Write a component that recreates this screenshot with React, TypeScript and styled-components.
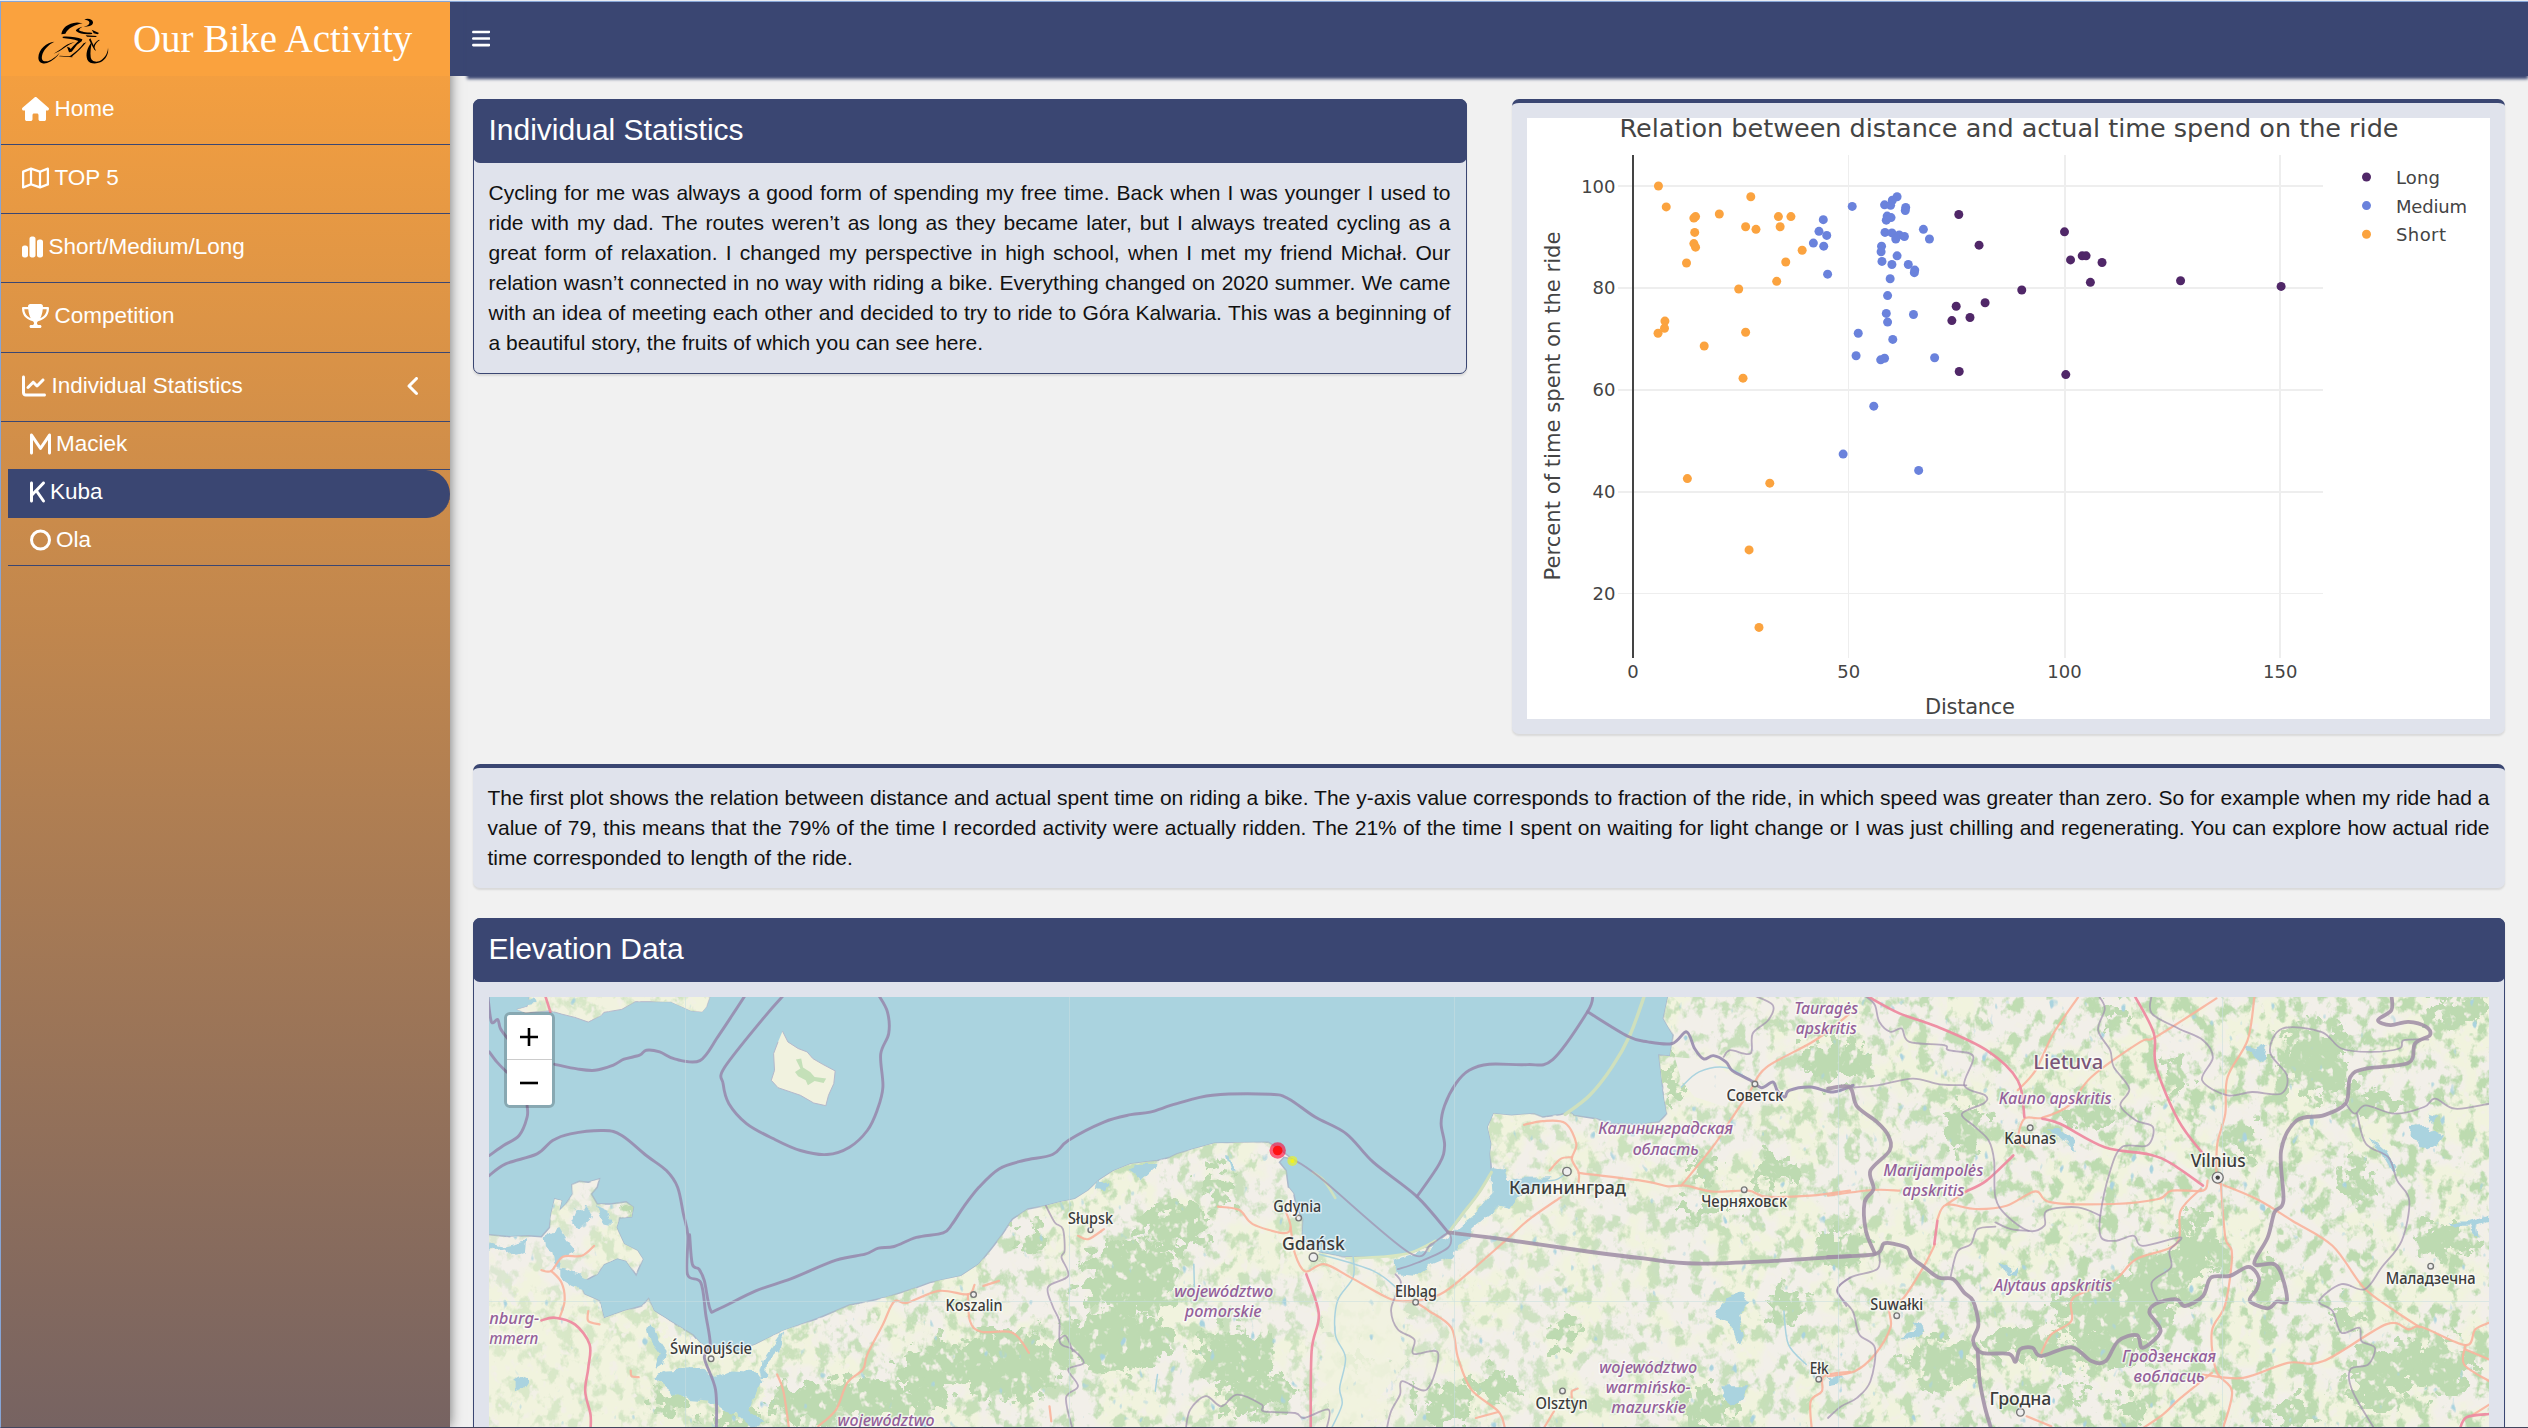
import React from "react";
import styled, { createGlobalStyle, css } from "styled-components";
import {
  FaAngleLeft,
  FaBars,
  FaChartLine,
  FaChartSimple,
  FaHouse,
  FaK,
  FaM,
  FaO,
  FaRegMap,
  FaTrophy,
} from "react-icons/fa6";

const navy = "#3a4672";
const orange = "#faa23e";
const panel = "#e0e3ec";

const GlobalStyle = createGlobalStyle`
  *, *::before, *::after { box-sizing: border-box; }
  body {
    margin: 0;
    background: #f1f1f1;
    font-family: "Liberation Sans", Arial, sans-serif;
    overflow: hidden;
  }
`;

const Window = styled.div`
  height: 1428px;
  padding-top: 1px;
  background: #e6ebf2;
  overflow: hidden;
`;

const Shell = styled.div`
  display: flex;
  height: 1427px;
  border-top: 1px solid #86a5d6;
  border-left: 1px solid #86a5d6;
  border-bottom: 1px solid #43465f;
  background: #f1f1f1;
  overflow: hidden;
`;

/* Sidebar */

const Sidebar = styled.aside`
  flex: none;
  width: 449px;
  z-index: 1;
  background: linear-gradient(${orange}, ${navy}) 0 0 / 100% 2080px no-repeat;
  box-shadow: 0 0 12px rgba(0, 0, 0, 0.55);
`;

const Brand = styled.div`
  display: flex;
  align-items: center;
  height: 74px;
  padding-left: 36px;
  background: ${orange};
  color: #fff;
  font: 39px/74px "Liberation Serif", "Times New Roman", serif;
  svg {
    margin-top: 3px;
  }
`;

const BrandName = styled.span`
  margin-left: 22.5px;
  white-space: nowrap;
`;

const Menu = styled.nav`
  display: flex;
  flex-direction: column;
`;

const itemText = css<{ $icon: number }>`
  display: flex;
  align-items: center;
  gap: 5.5px;
  color: #fff;
  font-size: 22.5px;
  border-bottom: 1px solid ${navy};
  svg {
    flex: none;
    width: 15px;
    height: 24px;
  }
  svg:first-child {
    width: ${(p) => p.$icon}px;
  }
`;

const MenuItem = styled.a<{ $icon: number; $tall?: boolean }>`
  ${itemText}
  height: ${(p) => (p.$tall ? 70 : 69)}px;
  padding: 0 29px 3px 21px;
  svg:last-child {
    margin-left: auto;
  }
`;

const SubMenu = styled.div`
  display: flex;
  flex-direction: column;
  padding-left: 7px;
`;

const SubItem = styled.a<{ $icon: number; $active?: boolean }>`
  ${itemText}
  height: 48px;
  padding: 0 0 3px 21.5px;
  ${(p) =>
    p.$active &&
    css`
      background: ${navy};
      border-radius: 0 24px 24px 0;
    `}
`;

/* Main column */

const Main = styled.div`
  flex: 1;
  display: flex;
  flex-direction: column;
  min-width: 0;
`;

const Topbar = styled.header`
  flex: none;
  z-index: 2;
  height: 74px;
  padding-left: 17px;
  background: ${navy};
`;

const TopbarInner = styled.div`
  display: flex;
  align-items: center;
  height: 74px;
  padding: 0 0 1px 5px;
  color: #fff;
  background: ${navy};
  box-shadow: 0 3px 3px ${navy};
  svg {
    width: 18.4px;
    height: 21px;
  }
`;

const Content = styled.main`
  display: flex;
  flex-direction: column;
  gap: 30px;
  padding: 23px 23.5px 0 22.5px;
`;

const Columns = styled.div`
  display: grid;
  grid-template-columns: 994px 1fr;
  align-items: start;
  gap: 45px;
`;

const Box = styled.section<{ $solid?: boolean }>`
  background: ${panel};
  border-radius: 7px;
  box-shadow: 0 2px 2px rgba(0, 0, 0, 0.1);
  ${(p) =>
    p.$solid
      ? css`
          border: 1px solid ${navy};
        `
      : css`
          border-top: 4px solid ${navy};
        `}
`;

const BoxHeader = styled.h3`
  margin: -1px -1px 0;
  height: 64px;
  padding-left: 16px;
  border-radius: 7px;
  background: ${navy};
  color: #fff;
  font-size: 30px;
  font-weight: 400;
  line-height: 62px;
`;

const BoxBody = styled.div`
  padding: 15px;
`;

const Text = styled.p`
  margin: 0;
  color: #111;
  font-size: 21px;
  line-height: 30px;
  text-align: justify;
`;

const Plot = styled.svg`
  display: block;
  width: 100%;
  height: 601px;
  background: #fff;
  font-family: Verdana, "DejaVu Sans", sans-serif;
`;

const MapFrame = styled.div`
  position: relative;
  height: 600px;
  overflow: hidden;
  background: #aad3df;
`;

const MapCanvas = styled.svg`
  display: block;
  width: 2001px;
  height: 600px;
  font-family: "Noto Sans", sans-serif;
`;

const ZoomControl = styled.div`
  position: absolute;
  left: 15px;
  top: 15px;
  width: 51px;
  border: 3px solid rgba(0, 0, 0, 0.2);
  background-clip: padding-box;
  border-radius: 6px;
`;

const ZoomButton = styled.button`
  display: flex;
  align-items: center;
  justify-content: center;
  width: 45px;
  height: 45px;
  padding: 0;
  border: 0;
  background: #fff;
  color: #000;
  &:first-child {
    border-bottom: 1px solid #ccc;
    border-radius: 3px 3px 0 0;
  }
  &:last-child {
    border-radius: 0 0 3px 3px;
  }
`;

const CyclistMark = () => (
  <svg width="73.4" height="48" viewBox="20 58 220 144">
    <path d="M72 132C50 133 24 155 24 180C24 194 36 200 50 196C66 190 80 178 88 165C76 178 60 190 48 191C36 192 33 184 35 174C39 156 54 141 72 132Z" />
    <path d="M184 133C170 150 165 170 171 186C177 199 196 200 210 194C226 186 236 168 233 150C232 170 220 184 206 191C192 195 182 188 181 178C179 164 182 148 184 133Z" />
    <path d="M93 110C95 92 112 76 140 74.500L157 77C134 81 112 92 105 108Z" />
    <path d="M162 66C172 60 187 65 188 74C188 84 176 88 160 87C172 85 178 80 177 74C176 69 170 67 162 66Z" />
    <path d="M156 87C148 89 135 95 137 100C148 109 164 111 186 109L184 105C166 105 152 102 146 98C146 93 152 90 156 87Z" />
    <path d="M184 96L206 106L202 110L190 107Z" />
    <path d="M97 117C118 116 140 118 156 125L154 131L140 141L124 162L116 164L110 147L118 150L121 154L128 146L144 130C130 124 112 123 97 121Z" />
    <path d="M134 133C118 136 102 144 92 154L70 168C82 164 92 158 100 152C110 144 122 138 134 133Z" />
    <path d="M168 134C158 146 142 164 124 177L116 177C134 166 150 150 160 137Z" />
    <path d="M88 174L126 176.500L126 178.500L86 176Z" />
    <path d="M166 113L200 115L196 118L170 117Z" />
    <path d="M180 122L197 160L192 156L186 146L176 126Z" />
    <path d="M206 126C198 130 190 138 188 148L192 150C194 140 200 132 208 128Z" />
  </svg>
);

/* Scatter plot */

type Point = [number, number];

const series: { name: string; color: string; points: Point[] }[] = [
  {
    name: "Long",
    color: "#502768",
    points: [
      [75.5, 94.4], [80.2, 88.4], [90.1, 79.6], [74.9, 76.4], [81.6, 77.1], [73.9, 73.6],
      [78.1, 74.2], [75.6, 63.6], [100, 91], [101.4, 85.5], [104.1, 86.3], [105, 86.3],
      [108.7, 85], [106, 81.1], [100.3, 63], [126.9, 81.4], [150.2, 80.3],
    ],
  },
  {
    name: "Medium",
    color: "#6a82dc",
    points: [
      [50.8, 96], [44.1, 93.4], [43.1, 91.1], [44.9, 90.3], [41.8, 88.8], [44.2, 88.2],
      [45.1, 82.7], [61.2, 97.9], [60.1, 97.2], [58.3, 96.3], [59.7, 96.2], [63.2, 95.8],
      [63.1, 95.2], [58.9, 94.1], [59.8, 93.8], [58.7, 93.3], [67.3, 91.5], [58.4, 90.9],
      [60, 90.8], [61.7, 90.4], [62.9, 90.1], [60.9, 89.6], [68.7, 89.6], [57.6, 88.2],
      [57.5, 87.1], [61.2, 86.3], [57.7, 85.2], [60, 84.6], [63.8, 84.6], [65.3, 83.5],
      [65.2, 83], [59.6, 81.8], [59, 78.5], [58.7, 75], [65, 74.8], [59, 73.3],
      [52.2, 71.1], [60.2, 69.9], [51.7, 66.7], [57.4, 65.9], [58.3, 66.2], [69.9, 66.3],
      [55.8, 56.8], [48.7, 47.4], [66.2, 44.2],
    ],
  },
  {
    name: "Short",
    color: "#fba33f",
    points: [
      [5.9, 100], [7.7, 95.9], [20, 94.5], [27.3, 97.9], [14.5, 94], [14.1, 93.7],
      [14.3, 90.9], [14.1, 88.7], [14.5, 88], [12.4, 84.9], [26.1, 92], [28.5, 91.5],
      [33.7, 94], [36.6, 94], [34.1, 92], [39.2, 87.4], [35.4, 85.1], [33.3, 81.3],
      [24.5, 79.8], [7.4, 73.5], [7.3, 72.1], [5.8, 71.1], [26.1, 71.3], [16.5, 68.6],
      [25.5, 62.3], [12.6, 42.6], [31.7, 41.7], [26.9, 28.6], [29.2, 13.4],
    ],
  },
];

const px = (d: number) => 106 + d * 4.315;
const py = (v: number) => 68 + (100 - v) * 5.097;

const ScatterPlot = () => (
  <Plot fill="#444">
    <text x="92.500" y="18.500" fontSize="25.5" textLength="779">
      Relation between distance and actual time spend on the ride
    </text>
    {[50, 100, 150].map((d) => (
      <rect key={d} x={Math.round(px(d)) - 1} y="37" width={d === 50 ? 1 : 2} height="503" fill="#eee" />
    ))}
    {[20, 40, 60, 80, 100].map((v) => (
      <g key={v}>
        <rect x="91" y={Math.round(py(v)) - 1} width="705" height={v === 20 ? 1 : 2} fill="#eee" />
        <text x="88.500" y={py(v) + 6.5} fontSize="18" textAnchor="end">
          {v}
        </text>
      </g>
    ))}
    <rect x="105" y="37" width="2" height="503" fill="#444" />
    {[0, 50, 100, 150].map((d) => (
      <text key={d} x={px(d)} y="559.500" fontSize="18" textAnchor="middle">
        {d}
      </text>
    ))}
    {[...series].reverse().map((s) =>
      s.points.map(([d, v], i) => <circle key={s.name + i} cx={px(d)} cy={py(v)} r="4.5" fill={s.color} />)
    )}
    {series.map((s, i) => (
      <g key={s.name}>
        <circle cx="839.500" cy={59 + i * 28.6} r="4.5" fill={s.color} />
        <text x="869" y={66 + i * 28.6} fontSize="18" textLength={[44, 71, 50][i]}>
          {s.name}
        </text>
      </g>
    ))}
    <text x="398" y="595.500" fontSize="21" textLength="90">
      Distance
    </text>
    <text transform="translate(32.5 462.5) rotate(-90)" fontSize="21" textLength="349" lengthAdjust="spacingAndGlyphs">
      Percent of time spent on the ride
    </text>
  </Plot>
);

type Sheet = "w" | "c" | "e";
const origin: Record<Sheet, number> = { w: -19, c: 661, e: 1339 };

const at = (s: Sheet, x: number, y: number): Point => [origin[s] + x / 2.24, y / 2.991 - 17];
const pts = (s: Sheet, list: string): Point[] =>
  list.trim().split(/\s+/).map((p) => {
    const [x, y] = p.split(",").map(Number);
    return at(s, x, y);
  });
const f = (n: number) => n.toFixed(1);
const poly = (p: Point[]) => "M" + p.map(([x, y]) => `${f(x)} ${f(y)}`).join("L");
const curve = (p: Point[]) => {
  let d = `M${f(p[0][0])} ${f(p[0][1])}`;
  for (let i = 0; i < p.length - 1; i++) {
    const a = p[i - 1] || p[i];
    const b = p[i];
    const c = p[i + 1];
    const e = p[i + 2] || c;
    d += `C${f(b[0] + (c[0] - a[0]) / 6)} ${f(b[1] + (c[1] - a[1]) / 6)} ${f(c[0] - (e[0] - b[0]) / 6)} ${f(
      c[1] - (e[1] - b[1]) / 6
    )} ${f(c[0])} ${f(c[1])}`;
  }
  return d;
};

const mainland = poly([
  ...pts(
    "w",
    `0,765 43,762 90,768 130,765 160,768 178,740 182,700 190,655 205,660 200,690 215,670 230,640 228,612 245,602 265,605 290,595
     285,620 272,640 285,670 315,670 350,663 366,680 362,708 335,712 328,740 345,790 375,810 387,835 372,882 350,840 330,832 300,850 285,880
     250,905 255,940 290,960 300,1012 345,990 385,975 400,953 412,990 450,1022 500,1062 515,1085 540,1105 600,1110 640,1090
     700,1050 780,1012 850,972 880,965 930,950 1000,920 1030,905 1100,885 1140,850 1170,800 1190,765 1215,715 1250,685
     1290,675 1320,665 1355,655 1385,630 1410,598 1440,572 1480,550 1540,540 1568,530`
  ),
  ...pts(
    "c",
    `60,520 100,505 145,488 200,487 265,485 290,505 318,535 300,530 290,545 305,570 310,620 322,640 330,690 342,715 340,760
     350,790 380,815 430,828 500,830 550,825 585,815 630,795 668,757 700,705 735,640 765,575 762,520 765,490
     757,440 770,400 810,405 860,400 880,410 920,402 940,395 950,405 1000,415 1030,430 1100,432 1140,425 1158,400
     1150,340 1145,280 1140,225 1165,228 1172,165 1150,115 1162,40`
  ),
  [2100, -20],
  [2100, 620],
  [-20, 620],
]);

const islands = [
  poly(pts("w", "135,40 128,80 105,88 125,98 180,92 205,102 235,112 265,126 295,105 300,97 340,88 370,65 450,65 495,92 520,95 530,80 540,40")),
  poly(pts("w", "700,153 712,185 735,205 755,215 768,235 790,252 818,272 815,310 803,345 797,376 770,368 740,345 690,322 675,300 682,270 680,220 690,185")),
];

const water = [
  poly(pts("w", "412,1190 440,1165 520,1160 550,1190 565,1180 590,1165 640,1170 655,1200 640,1240 628,1285 655,1325 640,1345 600,1300 570,1290 535,1255 490,1250 450,1230")),
  poly(pts("w", "165,770 200,745 215,780 235,810 205,830 200,862 190,850 185,815 168,800")),
  poly(pts("w", "43,785 75,795 128,778 125,815 100,828 75,800 43,810")),
  poly(pts("w", "285,675 310,690 318,735 300,730 290,700")),
  poly(pts("w", "235,690 260,675 275,705 245,745 225,720")),
  poly(pts("w", "200,862 245,880 275,900 260,930 230,915 200,890")),
  poly(pts("w", "100,1200 125,1182 130,1195 115,1225 100,1230")),
  poly(pts("w", "395,1040 410,1030 420,1070 440,1110 435,1150 415,1170 425,1120 402,1080")),
  poly(pts("w", "650,1190 655,1140 690,1070 705,1052 690,1110 668,1140 665,1190")),
  poly(pts("w", "1475,565 1490,550 1545,550 1525,575 1505,600 1490,580")),
  poly(pts("w", "1405,600 1430,605 1425,630 1402,625")),
  poly(pts("w", "110,52 140,52 145,68 118,75")),
  poly(pts("c", "550,840 585,825 630,800 668,765 700,730 735,690 765,640 762,575 775,562 795,568 800,592 900,590 870,620 820,652 805,685 775,675 765,700 725,745 715,770 690,800 675,825 630,850 598,885 555,880")),
  poly(pts("c", "1270,985 1290,950 1320,935 1345,960 1320,1000 1330,1060 1322,1095 1300,1030 1265,1010")),
  poly(pts("c", "1280,1215 1345,1215 1330,1250 1310,1275 1285,1245")),
  poly(pts("c", "172,520 180,525 188,570 182,565")),
  poly(pts("e", "1305,440 1345,435 1352,455 1380,465 1370,485 1345,503 1325,500 1318,475 1302,465")),
  poly(pts("e", "1390,725 1430,725 1481,705 1481,722 1452,735 1455,775 1440,738 1405,738")),
  poly(pts("e", "380,845 400,855 410,880 430,850 425,885 395,880")),
  poly(pts("e", "190,1020 212,1040 215,1060 195,1075 160,1070 195,1055")),
  poly(pts("e", "1215,470 1250,510 1275,565 1268,580 1245,530")),
  poly(pts("e", "490,440 520,445 550,480 558,515 535,480 510,460")),
  poly(pts("e", "930,200 960,210 985,195 975,240 950,225")),
  poly(pts("e", "1345,400 1368,410 1355,428")),
  poly(pts("e", "0,1190 40,1185 20,1210 0,1215")),
];

const seaBorders = [
  pts("w", "617,45 590,100 555,170 515,241 460,237 425,215 395,210 380,225 345,237 320,255 280,270 240,266 190,252"),
  pts("w", "43,215 60,245 82,275"),
  pts("w", "40,50 48,125 62,118 68,145 84,175"),
  pts("w", "128,375 128,410 110,465 75,495 43,525"),
  pts("w", "43,585 80,550 150,520 185,480 225,460 300,450 340,465 395,525 440,570 465,620 478,700 488,765 487,880 517,905 528,1000 538,1090 525,1130 550,1225 552,1345"),
  pts("w", "703,45 660,110 570,262 567,310 580,370 620,430 680,475 740,510 800,522 850,500 890,450 912,390 925,320 920,222 938,160 935,95 915,45"),
  [
    ...pts("w", "492,762 498,850 513,865 525,900 538,985 555,985 640,930 720,893 820,838 885,820 915,802 950,797 1000,770 1060,756 1080,730 1105,680 1140,620 1185,565 1240,540 1305,522 1340,480 1420,425 1480,403"),
    ...pts("c", "0,395 60,370 140,345 270,342 310,355 370,410 440,460 500,545 598,648 668,755"),
  ],
  pts("c", "598,648 648,550 660,495 652,430 660,375 685,310 715,270 760,252 845,253 902,238 980,95 992,45"),
  pts("c", "980,95 1070,168 1115,185 1170,190 1202,155 1220,205 1240,236 1262,226 1290,245 1305,272 1345,300 1370,322 1395,305 1405,330 1422,350 1432,330 1480,320 1530,335 1575,315"),
];

const countryBorders = [
  pts("c", "668,755 800,777 980,812 1100,832 1222,848 1400,840 1568,826"),
  pts("e", "0,828 105,820 125,788 150,790 178,802 188,830 215,858 248,890 280,895 305,935 325,960 337,1030 325,1078 345,1115 405,1118 420,1142 430,1105 458,1100 478,1125 545,1098 590,1140 622,1140 650,1080 692,1062 705,1100 745,1050 720,995 735,968 780,955 800,975 840,945 858,890 900,885 942,858 965,890 960,925 945,960 985,982 1005,962 1028,960 1018,890 1000,850 955,848 985,770 1000,695 1020,660 1015,510 1050,420 1110,405 1160,368 1170,290 1205,265 1300,248 1315,190 1348,165 1340,140 1300,125 1260,135 1232,120 1262,90 1262,45"),
  pts("e", "0,325 48,320 65,378 110,425 135,465 138,510 95,570 102,625 82,665 85,750 105,818"),
  pts("e", "335,1105 340,1200 352,1280 366,1345"),
];

const regionBorders = [
  pts("w", "1290,675 1310,725 1328,745 1332,810 1325,830 1340,885 1295,918 1305,975 1320,1020 1322,1085 1350,1105 1375,1145 1340,1165 1362,1215 1335,1250 1350,1345"),
  pts("w", "1320,1075 1335,1065 1350,1110"),
  pts("c", "550,880 562,905 550,945 540,990 555,1045 592,1075 590,1118 645,1115 620,1225 565,1200 560,1240 540,1290 530,1345"),
  pts("c", "80,1345 90,1285 125,1245 160,1275 195,1240 250,1270 255,1290 325,1295 345,1310 400,1285 395,1345"),
  pts("c", "1285,230 1300,210 1345,220 1350,160 1385,120 1395,75 1350,45"),
  pts("e", "85,50 105,75 115,125 140,155 165,145 182,185 260,195 270,210 325,228 305,315 352,345 350,368 300,400 330,440 360,480 372,540 375,650 400,705 450,750 485,735 490,690 560,680 610,705"),
  pts("e", "48,322 110,315 190,295 250,312 310,315"),
  pts("e", "375,738 335,745 320,790 290,812 275,885"),
  pts("e", "375,725 410,745 450,750"),
  pts("e", "605,45 620,85 605,150 632,210 640,260 675,325 655,375 690,420 728,440 715,495 658,500 630,580 610,705 612,770 645,780 685,765 705,795 790,770 765,810 768,860 725,905 740,965"),
  pts("e", "725,45 725,100 785,145 840,180 862,232 838,300 895,345 950,335 1015,340 1028,285 990,215 1018,145 1105,155 1150,205 1215,215 1280,205 1290,180 1345,178"),
  pts("e", "1160,370 1180,400 1205,375 1270,400 1335,380 1360,355 1405,385 1481,370"),
  pts("e", "1185,400 1205,490 1255,530 1275,600 1302,660 1285,780 1240,860 1202,925 1150,910 1100,960 1130,990 1150,1055 1190,1040 1195,1080 1225,1100 1210,1150 1170,1165 1175,1230 1225,1345"),
  pts("e", "115,820 110,865 50,890 20,930 55,990 70,1060 105,1100 95,1200 65,1250 30,1275 0,1310"),
  pts("c", "1568,890 1540,925 1560,975"),
  pts("c", "318,535 380,590 580,815 630,790 668,757 668,800 600,845 555,865"),
];

const trunkRoads = [
  pts("w", "160,868 182,870 208,828 250,825 278,795"),
  pts("w", "182,870 205,905 212,960 200,1012"),
  pts("w", "265,990 265,1020 290,1030"),
  pts("w", "1130,912 1115,940 1050,930 980,965 950,962 925,1030 890,1120 880,1165 845,1205 820,1285 780,1335"),
  pts("w", "1115,940 1120,1020 1145,1052 1215,1055 1252,1115"),
  pts("w", "1150,915 1185,900"),
  pts("w", "1362,765 1385,775 1420,745"),
  pts("w", "688,1180 702,1230 715,1345"),
  pts("w", "1298,1275 1302,1320"),
  pts("w", "360,1168 362,1185 378,1188"),
  pts("c", "152,678 200,688 230,730 298,757 315,740 305,695"),
  pts("c", "315,740 325,820 348,872 390,850 450,890 540,955 590,962 625,990 675,1040 690,1130 720,1225 780,1290 795,1340"),
  pts("c", "730,1310 780,1292"),
  pts("c", "590,962 650,940 710,880 800,775 850,715 920,650"),
  pts("c", "838,433 880,422 930,428 955,490 945,535 960,575 960,605"),
  pts("c", "895,570 920,535 945,530"),
  pts("c", "960,577 1110,602 1160,617 1200,615 1260,633 1340,630 1380,648 1480,645 1568,630"),
  pts("c", "1190,615 1260,500 1300,420 1345,330 1380,262 1490,180 1568,100"),
  pts("c", "905,1290 880,1345"),
  pts("c", "1482,1340 1480,1260 1505,1230 1510,1185 1568,1172"),
  pts("c", "945,1250 945,1230 958,1222"),
  pts("e", "0,645 100,628 160,630"),
  pts("e", "0,1185 60,1170 105,1120 140,1040 138,980 170,950 215,855 240,790"),
  pts("e", "245,715 265,672 330,685 400,675 465,632 500,665 640,670 740,655 770,630 840,630 850,600"),
  pts("e", "265,672 310,632"),
  pts("e", "440,500 425,480 440,415 480,412 540,375 590,290 700,185 735,170 870,55"),
  pts("e", "425,330 465,270 505,160 560,52"),
  pts("e", "955,52 940,180 895,290 890,400 872,490 870,590"),
  pts("e", "870,605 960,655 1040,720 1130,795 1200,920 1270,990 1325,1038"),
  pts("e", "835,625 790,690 780,790 690,835 640,900 550,950 545,1020 500,1060 478,1115"),
  pts("e", "880,610 890,770 905,820 890,970 860,1050 870,1170 905,1230 885,1340"),
  pts("e", "840,1180 930,1190 1030,1145 1110,1140 1250,1030 1300,1045 1330,1038 1428,1092 1450,1045 1481,1025"),
  pts("e", "1428,1092 1425,1150 1481,1200"),
  pts("e", "1428,1105 1481,1135"),
  pts("e", "860,1175 790,1250 750,1300 700,1345"),
  pts("e", "445,1305 500,1335"),
  pts("e", "1445,1300 1481,1270"),
];

const motorways = [
  pts("w", "160,1018 190,1010 235,1030 268,1090 265,1160 258,1230 270,1300 270,1345"),
  pts("w", "168,45 180,95"),
  pts("c", "350,880 378,1000 362,1110 360,1345"),
  pts("e", "90,50 160,100 245,140 355,210 425,300 440,410"),
  pts("e", "480,415 520,430 620,500 720,522 770,550 840,615"),
  pts("e", "688,50 730,160 735,260 785,420 840,520"),
  pts("e", "310,632 355,600 415,525"),
  pts("e", "245,720 238,790"),
  pts("e", "1415,1345 1430,1308 1481,1298"),
];

const rivers = [
  pts("c", "455,825 455,890 420,960 415,1060 438,1130 425,1220 430,1270 405,1345"),
  pts("c", "380,820 500,870 560,930"),
  pts("c", "98,850 100,940"),
  pts("c", "1190,320 1230,275 1290,262 1345,300"),
  pts("c", "820,597 900,600 930,580"),
  pts("w", "1540,1180 1535,1230"),
  pts("c", "1420,990 1430,1090 1470,1150"),
];

// [sheet, x, y, rx, ry] of the larger woods
const woods: [Sheet, number, number, number, number][] = [
  ["w", 1480, 890, 50, 36], ["w", 1440, 1080, 60, 30], ["w", 1200, 1150, 60, 34], ["w", 1260, 780, 16, 14],
  ["w", 920, 1250, 70, 20], ["w", 760, 1270, 40, 20], ["w", 590, 1325, 30, 12], ["w", 440, 1260, 14, 18],
  ["w", 355, 685, 5, 9], ["w", 1050, 1160, 36, 22],
  ["c", 60, 740, 36, 22], ["c", 150, 620, 14, 20], ["c", 190, 1120, 40, 26], ["c", 240, 1240, 40, 20],
  ["c", 460, 1120, 8, 18], ["c", 930, 1060, 14, 14], ["c", 1165, 290, 8, 26], ["c", 1400, 570, 22, 12],
  ["c", 1240, 570, 20, 10], ["c", 1430, 980, 18, 18], ["c", 1530, 240, 34, 22], ["c", 1540, 800, 26, 18],
  ["c", 770, 1210, 22, 16], ["c", 1230, 1280, 30, 20], ["c", 1240, 690, 26, 8], ["c", 660, 1260, 30, 18],
  ["e", 40, 240, 24, 20], ["e", 40, 790, 24, 14], ["e", 310, 450, 18, 28], ["e", 590, 400, 24, 16],
  ["e", 640, 1000, 60, 30], ["e", 820, 820, 30, 22], ["e", 740, 900, 40, 24], ["e", 260, 1150, 36, 26],
  ["e", 600, 1120, 60, 14], ["e", 430, 1080, 40, 14], ["e", 1090, 270, 36, 28], ["e", 1090, 180, 30, 14],
  ["e", 930, 480, 16, 16], ["e", 1350, 1150, 46, 28], ["e", 1230, 1200, 26, 32], ["e", 1380, 780, 34, 14],
  ["e", 1400, 90, 30, 18], ["e", 1220, 370, 24, 14], ["e", 990, 880, 10, 18], ["e", 640, 90, 14, 12],
  ["e", 820, 720, 16, 12], ["e", 1160, 1000, 12, 14], ["e", 1040, 1300, 26, 14], ["e", 780, 300, 10, 20],
  ["e", 690, 1270, 20, 10], ["e", 560, 1220, 14, 8], ["e", 1190, 600, 14, 24],
];

type Label = [Sheet, number, number, string, number, "city" | "region" | "country", number?];
const labels: Label[] = [
  ["w", 1390, 730, "Słupsk", 45, "city"],
  ["w", 1129, 990, "Koszalin", 57, "city"],
  ["w", 540, 1118, "Świnoujście", 82, "city"],
  ["c", 330, 693, "Gdynia", 48, "city"],
  ["c", 366, 808, "Gdańsk", 63, "city", 18.5],
  ["c", 596, 947, "Elbląg", 42, "city"],
  ["c", 935, 640, "Калининград", 117, "city", 18.5],
  ["c", 1331, 680, "Черняховск", 86, "city"],
  ["c", 1355, 362, "Советск", 57, "city"],
  ["c", 922, 1282, "Olsztyn", 52, "city"],
  ["c", 1499, 1177, "Ełk", 19, "city"],
  ["e", 453, 490, "Kaunas", 52, "city"],
  ["e", 874, 559, "Vilnius", 55, "city", 18.5],
  ["e", 154, 988, "Suwałki", 53, "city"],
  ["e", 1350, 908, "Маладзечна", 90, "city"],
  ["e", 431, 1270, "Гродна", 62, "city", 18.5],
  ["e", 538, 265, "Lietuva", 70, "country", 20],
  ["w", 99, 1030, "nburg-", 50, "region"],
  ["w", 98, 1090, "mmern", 49, "region"],
  ["w", 932, 1335, "województwo", 97, "region"],
  ["c", 165, 948, "województwo", 99, "region"],
  ["c", 164, 1008, "pomorskie", 77, "region"],
  ["c", 1155, 462, "Калининградская", 135, "region"],
  ["c", 1155, 522, "область", 66, "region"],
  ["c", 1116, 1176, "województwo", 98, "region"],
  ["c", 1116, 1236, "warmińsko-", 85, "region"],
  ["c", 1117, 1296, "mazurskie", 75, "region"],
  ["e", -4, 102, "Tauragės", 64, "region"],
  ["e", -4, 162, "apskritis", 61, "region"],
  ["e", 509, 372, "Kauno apskritis", 113, "region"],
  ["e", 236, 586, "Marijampolės", 100, "region"],
  ["e", 236, 646, "apskritis", 62, "region"],
  ["e", 504, 931, "Alytaus apskritis", 118, "region"],
  ["e", 764, 1142, "Гродзенская", 94, "region"],
  ["e", 764, 1202, "вобласць", 71, "region"],
];
const labelColor = { city: "#3c3c3c", region: "#94609a", country: "#7a5578" };

const towns: [Sheet, number, number, number][] = [
  ["w", 1390, 748, 2.5], ["w", 1128, 941, 2.8], ["w", 540, 1133, 2.8], ["c", 333, 712, 2.8],
  ["c", 366, 829, 4.2], ["c", 595, 964, 2.8], ["c", 934, 573, 4.2], ["c", 1331, 627, 2.8],
  ["c", 1355, 311, 2.8], ["c", 924, 1229, 2.8], ["c", 1498, 1194, 2.8], ["e", 453, 442, 2.8],
  ["e", 873, 591, 5.5], ["e", 154, 1004, 2.8], ["e", 1350, 856, 2.8], ["e", 431, 1293, 3.8],
];

const Lines = ({ of, color, width, opacity = 1 }: { of: Point[][]; color: string; width: number; opacity?: number }) => (
  <g fill="none" stroke={color} strokeWidth={width} strokeOpacity={opacity} strokeLinejoin="round" strokeLinecap="round">
    {of.map((p, i) => (
      <path key={i} d={curve(p)} />
    ))}
  </g>
);

const ElevationMap = () => {
  const red = at("c", 286, 510);
  const yellow = at("c", 319, 541);
  const capital = at("e", 873, 591);
  return (
    <MapCanvas viewBox="0 0 2001 600">
      <defs>
        <clipPath id="land">
          <path d={mainland} />
          <path d={islands[0]} />
        </clipPath>
        <filter id="forest" x="0" y="0" width="100%" height="100%" colorInterpolationFilters="sRGB">
          <feTurbulence type="fractalNoise" baseFrequency="0.07 0.055" numOctaves="4" seed="11" />
          <feColorMatrix values="0 0 0 0 0.74  0 0 0 0 0.857  0 0 0 0 0.69  7 0 0 0 -3.5" />
        </filter>
        <filter id="clearings" x="0" y="0" width="100%" height="100%" colorInterpolationFilters="sRGB">
          <feTurbulence type="fractalNoise" baseFrequency="0.1 0.085" numOctaves="3" seed="31" />
          <feColorMatrix values="0 0 0 0 0.948  0 0 0 0 0.94  0 0 0 0 0.9  7 0 0 0 -4.15" />
        </filter>
        <filter id="fields" x="0" y="0" width="100%" height="100%" colorInterpolationFilters="sRGB">
          <feTurbulence type="fractalNoise" baseFrequency="0.018" numOctaves="4" seed="4" />
          <feColorMatrix values="0 0 0 0 0.945  0 0 0 0 0.953  0 0 0 0 0.87  8 0 0 0 -3.7" />
        </filter>
        <filter id="ponds" x="0" y="0" width="100%" height="100%" colorInterpolationFilters="sRGB">
          <feTurbulence type="fractalNoise" baseFrequency="0.1 0.06" numOctaves="2" seed="23" />
          <feColorMatrix values="0 0 0 0 0.667  0 0 0 0 0.827  0 0 0 0 0.874  10 0 0 0 -7.5" />
        </filter>
        <filter id="ragged" x="-20%" y="-20%" width="140%" height="140%">
          <feTurbulence type="fractalNoise" baseFrequency="0.07" numOctaves="4" seed="2" />
          <feDisplacementMap in="SourceGraphic" scale="50" xChannelSelector="R" yChannelSelector="G" />
        </filter>
        <filter id="jagged" x="-5%" y="-5%" width="110%" height="110%">
          <feTurbulence type="fractalNoise" baseFrequency="0.09" numOctaves="2" seed="8" />
          <feDisplacementMap in="SourceGraphic" scale="9" xChannelSelector="R" yChannelSelector="G" />
        </filter>
        <linearGradient id="density" x1="0" x2="1">
          <stop offset="0" stopColor="#fff" stopOpacity="0.4" />
          <stop offset="0.2" stopColor="#fff" stopOpacity="0.85" />
          <stop offset="0.36" stopColor="#fff" stopOpacity="0.8" />
          <stop offset="0.43" stopColor="#fff" stopOpacity="0.55" />
          <stop offset="0.62" stopColor="#fff" stopOpacity="0.8" />
          <stop offset="0.8" stopColor="#fff" />
        </linearGradient>
        <mask id="cover">
          <rect width="2001" height="600" fill="url(#density)" />
        </mask>
      </defs>
      <rect width="2001" height="600" fill="#aad3df" />
      <path d={mainland} fill="#f2efe9" stroke="#a9b8cb" strokeWidth="1.5" />
      {islands.map((d) => (
        <path key={d} d={d} fill="#f1f2df" stroke="#b5b8cb" strokeWidth="1" />
      ))}
      <path
        d={poly(pts("w", "730,238 742,235 746,262 762,275 772,290 798,295 792,308 772,302 757,315 752,300 735,288 728,275 740,265"))}
        fill="#c4e0b8"
      />
      <g clipPath="url(#land)">
        <rect width="2001" height="600" filter="url(#fields)" />
        <path d={poly(pts("w", "0,900 600,1100 700,1345 0,1345"))} fill="#f1f3de" filter="url(#ragged)" />
        <g mask="url(#cover)">
          <rect width="2001" height="600" filter="url(#forest)" />
        </g>
        <g fill="#bddab1" filter="url(#ragged)">
          {woods.map(([s, x, y, rx, ry], i) => {
            const [cx, cy] = at(s, x, y);
            return <ellipse key={i} cx={cx} cy={cy} rx={rx} ry={ry} />;
          })}
        </g>
        <rect width="2001" height="600" filter="url(#clearings)" />
        <path
          d={poly(pts("c", "385,870 440,880 560,950 590,1040 560,1180 500,1345 375,1345 390,1100"))}
          fill="#f1f3de"
          fillOpacity="0.8"
          filter="url(#ragged)"
        />
        <path d={poly(pts("c", "1175,230 1260,240 1320,310 1290,380 1220,350 1190,300"))} fill="#f2efe9" />
        <rect width="2001" height="600" filter="url(#ponds)" />
      </g>
      <g fill="#aad3df" filter="url(#jagged)">
        {water.map((d) => (
          <path key={d} d={d} />
        ))}
      </g>
      <g fill="none" strokeLinecap="round">
        <path d={curve(pts("c", "930,402 985,345 1035,260 1075,165 1108,45"))} stroke="#cfe0bd" strokeWidth="3.4" />
        <path d={curve(pts("c", "668,757 700,700 735,640 765,575"))} stroke="#d0e1be" strokeWidth="3" />
        <path d={curve(pts("c", "365,575 390,600 415,652"))} stroke="#d0e1be" strokeWidth="2.6" />
        <path d={curve(pts("c", "440,832 520,828 585,815 640,780"))} stroke="#d8e6c0" strokeWidth="2.6" />
      </g>
      <Lines of={rivers} color="#aad3df" width={1.5} />
      <Lines of={trunkRoads} color="#f9b29c" width={2.2} opacity={0.9} />
      <Lines of={motorways} color="#ee8aa0" width={2.6} opacity={0.95} />
      <Lines of={regionBorders} color="#9f8fae" width={1.8} opacity={0.7} />
      <Lines of={seaBorders} color="#978bae" width={2.9} opacity={0.9} />
      <Lines of={countryBorders} color="#a08fa6" width={3.8} opacity={0.88} />
      <g stroke="#c9dfe0" strokeOpacity="0.55" strokeWidth="1">
        {[196, 580, 965, 1349, 1733].map((x) => (
          <path key={x} d={`M${x}.5 0V600`} />
        ))}
        <path d="M0 304.500H2001" />
      </g>
      <g fill="#eee" stroke="#777" strokeWidth="1.4">
        {towns.map(([s, x, y, r], i) => {
          const [cx, cy] = at(s, x, y);
          return <circle key={i} cx={cx} cy={cy} r={r} />;
        })}
      </g>
      <circle cx={capital[0]} cy={capital[1]} r="2.2" fill="#444" />
      {labels.map(([s, lx, ly, text, width, kind, size = 15.5], i) => {
        const [x, y] = at(s, lx, ly);
        return (
          <text
            key={i}
            x={x}
            y={y}
            fontSize={size}
            fontWeight="500"
            fontStyle={kind === "region" ? "italic" : "normal"}
            fill={labelColor[kind]}
            stroke="#fff"
            strokeOpacity="0.65"
            strokeWidth="3"
            strokeLinejoin="round"
            paintOrder="stroke"
            textAnchor="middle"
            textLength={width}
            lengthAdjust="spacingAndGlyphs"
          >
            {text}
          </text>
        );
      })}
      <circle cx={red[0]} cy={red[1]} r="8.2" fill="#f03" fillOpacity="0.6" />
      <circle cx={red[0]} cy={red[1]} r="4.8" fill="#ff1212" />
      <circle cx={yellow[0]} cy={yellow[1]} r="5" fill="#e2ee3a" fillOpacity="0.75" />
      <circle cx={yellow[0]} cy={yellow[1]} r="2" fill="#f2f21c" />
    </MapCanvas>
  );
};

export default function App() {
  return (
    <Window>
      <GlobalStyle />
      <Shell>
        <Sidebar>
          <Brand>
            <CyclistMark />
            <BrandName>Our Bike Activity</BrandName>
          </Brand>
          <Menu>
            <MenuItem $icon={27}><FaHouse /><span>Home</span></MenuItem>
            <MenuItem $icon={27}><FaRegMap /><span>TOP 5</span></MenuItem>
            <MenuItem $icon={21}><FaChartSimple /><span>Short/Medium/Long</span></MenuItem>
            <MenuItem $icon={27} $tall><FaTrophy /><span>Competition</span></MenuItem>
            <MenuItem $icon={24}><FaChartLine /><span>Individual Statistics</span><FaAngleLeft /></MenuItem>
            <SubMenu>
              <SubItem $icon={21}><FaM /><span>Maciek</span></SubItem>
              <SubItem $icon={15} $active><FaK /><span>Kuba</span></SubItem>
              <SubItem $icon={21}><FaO /><span>Ola</span></SubItem>
            </SubMenu>
          </Menu>
        </Sidebar>
        <Main>
          <Topbar>
            <TopbarInner>
              <FaBars />
            </TopbarInner>
          </Topbar>
          <Content>
            <Columns>
              <Box $solid>
                <BoxHeader>Individual Statistics</BoxHeader>
                <BoxBody>
                  <Text>
                    Cycling for me was always a good form of spending my free time. Back when I was younger I used to
                    ride with my dad. The routes weren’t as long as they became later, but I always treated cycling as a
                    great form of relaxation. I changed my perspective in high school, when I met my friend Michał. Our
                    relation wasn’t connected in no way with riding a bike. Everything changed on 2020 summer. We came
                    with an idea of meeting each other and decided to try to ride to Góra Kalwaria. This was a beginning
                    of a beautiful story, the fruits of which you can see here.
                  </Text>
                </BoxBody>
              </Box>
              <Box>
                <BoxBody>
                  <ScatterPlot />
                </BoxBody>
              </Box>
            </Columns>
            <Box>
              <BoxBody>
                <Text>
                  The first plot shows the relation between distance and actual spent time on riding a bike. The y-axis
                  value corresponds to fraction of the ride, in which speed was greater than zero. So for example when
                  my ride had a value of 79, this means that the 79% of the time I recorded activity were actually
                  ridden. The 21% of the time I spent on waiting for light change or I was just chilling and
                  regenerating. You can explore how actual ride time corresponded to length of the ride.
                </Text>
              </BoxBody>
            </Box>
            <Box $solid>
              <BoxHeader>Elevation Data</BoxHeader>
              <BoxBody>
                <MapFrame>
                  <ElevationMap />
                  <ZoomControl>
                    <ZoomButton aria-label="Zoom in">
                      <svg width="18" height="18" viewBox="0 0 18 18" stroke="#000" strokeWidth="2.6">
                        <path d="M0 9H18M9 0V18" />
                      </svg>
                    </ZoomButton>
                    <ZoomButton aria-label="Zoom out">
                      <svg width="18" height="18" viewBox="0 0 18 18" stroke="#000" strokeWidth="2.6">
                        <path d="M0 9H18" />
                      </svg>
                    </ZoomButton>
                  </ZoomControl>
                </MapFrame>
              </BoxBody>
            </Box>
          </Content>
        </Main>
      </Shell>
    </Window>
  );
}
